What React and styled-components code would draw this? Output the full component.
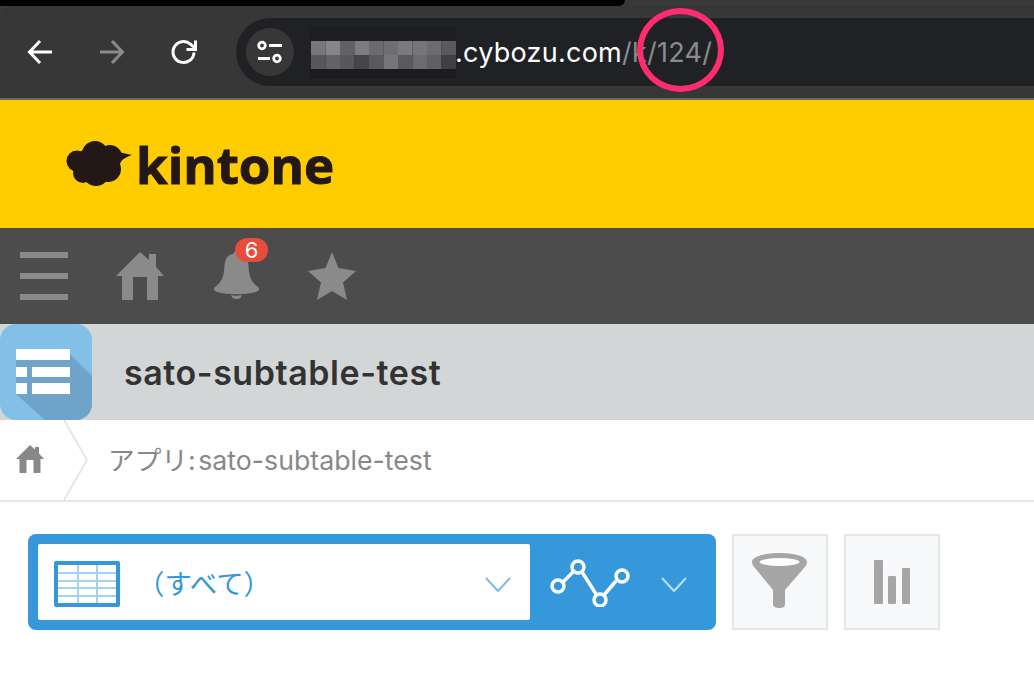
import React from "react";
import styled, { createGlobalStyle } from "styled-components";

const Global = createGlobalStyle`
  html, body { margin: 0; padding: 0; background: #fff; overflow: hidden; }
  * { box-sizing: border-box; }
`;
const Page = styled.div`
  width: 1034px; height: 686px; background: #fff; overflow: hidden;
  font-family: "Inter", "Noto Sans CJK JP", sans-serif;
`;
const BrowserFrame = styled.div`
  height: 100px; background: #3a3a3a; position: relative;
  border-bottom: 2px solid #6f6a58;
`;
const TabStrip = styled.div`
  height: 6px; width: 625px; background: #000; border-bottom-right-radius: 10px;
`;
const Toolbar = styled.div`
  height: 92px; background: #373737; border-top-left-radius: 12px;
  display: flex; align-items: flex-start; padding: 12px 0 0 0;
`;
const NavIcons = styled.div`
  width: 236px; height: 68px; display: flex; align-items: center; flex: none;
`;
const NavIcon = styled.svg`
  width: 28px; height: 28px; flex: none; margin-left: ${p => p.$ml}px;
`;
const Omnibox = styled.div`
  flex: 1; height: 68px; background: #202124; border-radius: 34px 0 0 34px;
  display: flex; align-items: center; padding-left: 10px;
`;
const TuneButton = styled.div`
  width: 48px; height: 48px; border-radius: 50%; background: #373737;
  display: flex; align-items: center; justify-content: center; flex: none;
`;
const Mosaic = styled.svg`
  width: 147px; height: 53px; margin-left: 15px; flex: none;
`;
const Url = styled.div`
  font-family: "Inter", sans-serif; font-size: 27px; color: #fff; white-space: nowrap;
  letter-spacing: 0.25px; margin-left: -1px;
`;
const UrlPath = styled.span`
  color: #8a8b8d;
`;
const Highlight = styled.div`
  position: absolute; left: 637px; top: 8px; width: 87px; height: 84px;
  border: 6px solid #ff2d70; border-radius: 50%;
`;
const Brand = styled.div`
  height: 128px; background: #ffcc00; display: flex; align-items: center; padding-left: 66px;
`;
const BrandMark = styled.svg`
  width: 68px; height: 48px; flex: none;
`;
const BrandName = styled.div`
  font-family: "Open Sans", sans-serif; font-weight: 700; font-size: 51px; color: #231815;
  margin-left: 2px; line-height: 1; -webkit-text-stroke: 1px #231815;
`;
const GlobalNav = styled.div`
  height: 96px; background: #4c4c4c; display: flex; align-items: center; padding-left: 20px;
`;
const NavGlyph = styled.svg`
  width: 48px; height: 48px; flex: none; margin-left: ${p => p.$ml || 0}px; overflow: visible;
`;
const BellWrap = styled.div`
  position: relative; width: 48px; height: 48px; margin-left: ${p => p.$ml}px; flex: none;
`;
const BellGlyph = styled.svg`
  width: 48px; height: 48px; overflow: visible; display: block;
`;
const Badge = styled.div`
  position: absolute; left: 22px; top: -14px; width: 33px; height: 24px;
  background: #e74c3c; color: #fff; border-radius: 12px; font-size: 22px;
  display: flex; align-items: center; justify-content: center; line-height: 1;
`;
const AppHeader = styled.div`
  height: 96px; background: #d3d6d7; display: flex; align-items: center;
`;
const AppIcon = styled.svg`
  width: 92px; height: 96px; flex: none;
`;
const AppTitle = styled.h1`
  margin: 0 0 0 32px; font-size: 34px; font-weight: 600; color: #333; letter-spacing: 0.55px;
`;
const Breadcrumb = styled.div`
  height: 82px; background: #fff; border-bottom: 2px solid #e3e7e8; padding-bottom: 2px;
  display: flex; align-items: center;
`;
const CrumbHome = styled.svg`
  width: 28px; height: 28px; margin-left: 16px; flex: none;
`;
const CrumbArrow = styled.svg`
  width: 26px; height: 80px; margin-left: 19px; flex: none; align-self: flex-start;
`;
const CrumbText = styled.div`
  margin: 0 0 2px 19px; font-size: 26.7px; color: #888; white-space: nowrap; word-spacing: -5px;
`;
const Actions = styled.div`
  display: flex; padding: 32px 0 0 28px; gap: 16px;
`;
const ViewBar = styled.div`
  width: 688px; height: 96px; background: #3498db; border-radius: 8px; padding: 10px;
  display: flex; align-items: center;
`;
const ViewSelect = styled.div`
  width: 492px; height: 76px; background: #fff; border-radius: 2px;
  display: flex; align-items: center; padding-left: 16px; flex: none;
`;
const TableGlyph = styled.svg`
  width: 66px; height: 46px; flex: none; margin-top: 4px;
`;
const ViewName = styled.div`
  margin-left: 17px; font-size: 27.4px; color: #3498db; flex: 1; white-space: nowrap;
  font-family: "Noto Sans CJK JP", sans-serif;
`;
const Chevron = styled.svg`
  width: 28px; height: 18px; flex: none; margin: ${p => p.$m};
`;
const GraphIcon = styled.svg`
  width: 82px; height: 50px; flex: none; margin-left: 20px;
`;
const SquareButton = styled.div`
  width: 96px; height: 96px; background: #f7f9fa; border: 2px solid #e3e7e8;
  display: flex; align-items: center; justify-content: center;
`;
const ButtonGlyph = styled.svg`
  width: 60px; height: 60px;
`;

const mosaicTop = ["#77777a", "#85858a", "#626265", "#7d7d80", "#6b6b6e", "#6f6f72", "#7b7b7e", "#757578", "#6c6c6f", "#5a5a5c"];
const mosaicBottom = ["#58585b", "#636366", "#58585a", "#46464a", "#5a5a5d", "#767679", "#5a5a5c", "#6c6c6e", "#606063", "#404043"];

export default function App() {
  return (
    <Page>
      <Global />
      <BrowserFrame>
        <TabStrip />
        <Toolbar>
          <NavIcons>
            <NavIcon $ml={26} viewBox="0 0 28 28" fill="none" stroke="#fff" strokeWidth="3">
              <path d="M26 14H4M14 3 3.500 14 14 25" />
            </NavIcon>
            <NavIcon $ml={44} viewBox="0 0 28 28" fill="none" stroke="#8a8a8a" strokeWidth="3">
              <path d="M2 14h22M14 3l10.500 11L14 25" />
            </NavIcon>
            <NavIcon $ml={44} viewBox="0 0 28 28" fill="none" stroke="#fff" strokeWidth="3">
              <path d="M24 14.500A10.500 10.500 0 1 1 20.500 6.200L25 10" />
              <path d="M25.500 2.500V11.500H16.500" />
            </NavIcon>
          </NavIcons>
          <Omnibox>
            <TuneButton>
              <svg width="26" height="24" viewBox="0 0 26 24" fill="none" stroke="#fff" strokeWidth="2.800">
                <circle cx="5" cy="5.500" r="3.300" />
                <path d="M12 5.500H25M1 18.500H13" />
                <circle cx="20" cy="18.500" r="3.300" />
              </svg>
            </TuneButton>
            <Mosaic viewBox="0 0 147 53">
              <rect width="147" height="15" fill="#1d1e20" />
              <rect y="43" width="147" height="10" fill="#1b1c1e" />
              {mosaicTop.map((c, i) => (
                <g key={c + i}>
                  <rect x={2 + 14.5 * i} y="15" width="14.500" height="14" fill={c} />
                  <rect x={2 + 14.5 * i} y="29" width="14.500" height="14" fill={mosaicBottom[i]} />
                </g>
              ))}
            </Mosaic>
            <Url>.cybozu.com<UrlPath>/k/124/</UrlPath></Url>
          </Omnibox>
        </Toolbar>
        <Highlight />
      </BrowserFrame>
      <Brand>
        <BrandMark viewBox="0 0 68 48" fill="#231815">
          <circle cx="29" cy="14" r="13" />
          <circle cx="44" cy="17" r="12" />
          <circle cx="11" cy="21" r="10.500" />
          <circle cx="17" cy="33" r="10" />
          <circle cx="30" cy="33" r="13" />
          <circle cx="42" cy="29" r="13" />
          <circle cx="28" cy="24" r="18" />
          <path d="M46 10 Q56 13 66 15 Q58 17 50 26Z" />
        </BrandMark>
        <BrandName>kintone</BrandName>
      </Brand>
      <GlobalNav>
        <NavGlyph viewBox="0 0 48 48" fill="#8a8a8a">
          <rect y="0" width="48" height="6" />
          <rect y="21" width="48" height="6" />
          <rect y="42" width="48" height="6" />
        </NavGlyph>
        <NavGlyph $ml={48} viewBox="0 0 48 48" fill="#8a8a8a">
          <path d="M24 0 33 8V2H40V15L48 24H42V48H31V25H17V48H6V24H0Z" />
        </NavGlyph>
        <BellWrap $ml={49}>
          <BellGlyph viewBox="0 0 48 48" fill="#8a8a8a">
            <path d="M23.500 -1c-2 0-3 1-3 3C14 3 12 7 11.500 14 11 24 9 30 2 35c-2 2-1 4 2 5 11 3 28 3 39 0 3-1 4-3 2-5-7-5-9-11-9.500-21C35 7 33 3 26.500 2c0-2-1-3-3-3Z" />
            <path d="M18 43c3 1 8 1 11 0-1 3-2.500 4-5.500 4s-4.500-1-5.500-4Z" />
          </BellGlyph>
          <Badge>6</Badge>
        </BellWrap>
        <NavGlyph $ml={47} viewBox="0 0 48 48" fill="#8a8a8a">
          <path d="M24 0 30.500 16 48 19 35 30.500 39 48 24 39 9 48 13 30.500 0 19 17.500 16Z" />
        </NavGlyph>
      </GlobalNav>
      <AppHeader>
        <AppIcon viewBox="0 0 92 96">
          <defs>
            <clipPath id="app-icon-clip"><rect width="92" height="96" rx="16" /></clipPath>
          </defs>
          <g clipPath="url(#app-icon-clip)">
            <rect width="92" height="96" fill="#82c0e7" />
            <path d="M70 30 92 52V96H45L16 70V25H70Z" fill="#6fa3c9" />
            <g fill="#fff">
              <rect x="16" y="25" width="54" height="11" />
              <rect x="16" y="43" width="11" height="10" />
              <rect x="32" y="43" width="38" height="10" />
              <rect x="16" y="59" width="11" height="11" />
              <rect x="32" y="59" width="38" height="11" />
            </g>
          </g>
        </AppIcon>
        <AppTitle>sato-subtable-test</AppTitle>
      </AppHeader>
      <Breadcrumb>
        <CrumbHome viewBox="0 0 28 28" fill="#888">
          <path d="M14 0 19 4.500V2H23V8.500L28 14H24.500V28H17.500V15H10.500V28H3.500V14H0Z" />
        </CrumbHome>
        <CrumbArrow viewBox="0 0 26 80" fill="none" stroke="#e3e7e8" strokeWidth="2">
          <path d="M1 0 24 40 1 80" />
        </CrumbArrow>
        <CrumbText>アプリ: sato-subtable-test</CrumbText>
      </Breadcrumb>
      <Actions>
        <ViewBar>
          <ViewSelect>
            <TableGlyph viewBox="0 0 66 46">
              <rect width="66" height="46" rx="2" fill="#3498db" />
              <rect x="4" y="4" width="58" height="38" fill="#fff" />
              <path d="M24 4V42M43 4V42M4 12H62M4 20H62M4 27H62M4 35H62" stroke="#a5d2ef" strokeWidth="2" fill="none" />
            </TableGlyph>
            <ViewName>（すべて）</ViewName>
            <Chevron $m="6px 18px 0 0" viewBox="0 0 28 18" fill="none" stroke="#7cbce8" strokeWidth="2">
              <path d="M2 2 14 15 26 2" />
            </Chevron>
          </ViewSelect>
          <GraphIcon viewBox="0 0 82 50" fill="none" stroke="#fff" strokeWidth="3.500">
            <path d="M12 26 24 14M32 15 46 37M54 38 66 24" />
            <circle cx="8" cy="29" r="6" />
            <circle cx="28" cy="10" r="6" />
            <circle cx="50" cy="43" r="6" />
            <circle cx="72" cy="19" r="6" />
          </GraphIcon>
          <Chevron $m="6px 0 0 28px" viewBox="0 0 28 18" fill="none" stroke="#bfe0f5" strokeWidth="2">
            <path d="M2 2 14 15 26 2" />
          </Chevron>
        </ViewBar>
        <SquareButton>
          <ButtonGlyph viewBox="0 0 60 60">
            <path fill="#a6a6a6" d="M2 10C2 4 16 1 29.500 1S57 4 57 10c0 2-1 4-3 6L35 38V52c0 3-2 4-5.500 4s-6.500-1-6.500-4V38L5 16C3 14 2 12 2 10Z" />
            <ellipse cx="29.500" cy="10" rx="20" ry="4" fill="#fff" />
          </ButtonGlyph>
        </SquareButton>
        <SquareButton>
          <ButtonGlyph viewBox="0 0 60 60" fill="#a6a6a6">
            <rect x="12" y="8" width="9" height="44" rx="1" />
            <rect x="26" y="24" width="8" height="28" rx="1" />
            <rect x="40" y="16" width="8" height="36" rx="1" />
          </ButtonGlyph>
        </SquareButton>
      </Actions>
    </Page>
  );
}
